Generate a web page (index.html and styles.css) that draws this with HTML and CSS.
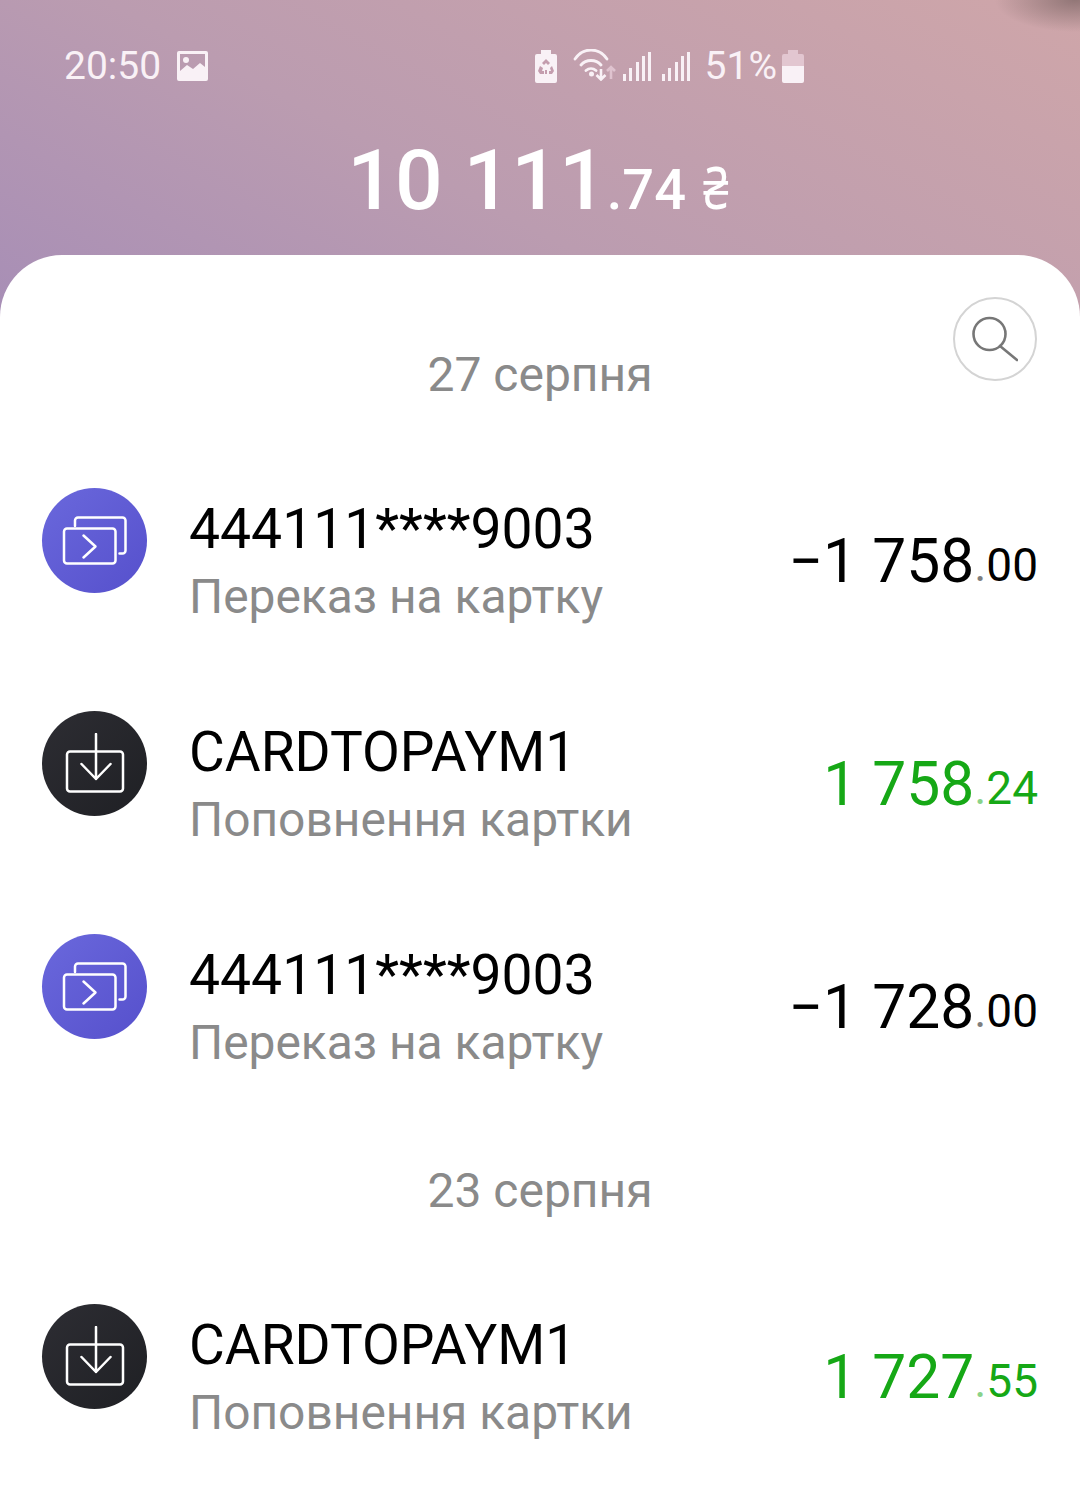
FILE: index.html
```html
<!DOCTYPE html>
<html>
<head lang="en">
    <meta charset="UTF-8">
    <title></title>
    <link rel="stylesheet" href="styles.css">
</head>
<body>
<div class="screen">
    <div class="top">
        <div class="status">
            <div class="status-left">
                <span class="clock">20:50</span>
                <svg class="pic-icon" width="31" height="30" viewBox="0 0 31 30">
                    <path fill="#f9f1f6" fill-rule="evenodd" d="M2 0h27a2 2 0 0 1 2 2v26a2 2 0 0 1-2 2H2a2 2 0 0 1-2-2V2a2 2 0 0 1 2-2zm1 3v17l7-6 6 4 7-6 5 4V3z"/>
                    <circle cx="9" cy="9" r="3" fill="#f9f1f6"/>
                </svg>
            </div>
            <div class="status-right">
                <svg width="24" height="33" viewBox="0 0 24 33">
                    <path fill="#f9f1f6" d="M7 0h10v4h4a2 2 0 0 1 2 2v25a2 2 0 0 1-2 2H3a2 2 0 0 1-2-2V6a2 2 0 0 1 2-2h4z"/>
                    <path fill="#c49dae" d="M12 9l4 4-2 2-2-2-2 2-2-2zM18 16l2 5-2 3h-3v-3h2l-1-3zM6 16l3 2-1 3h2v3H6l-2-3zM11 20h2v4h-2z"/>
                </svg>
                <svg class="wifi" width="43" height="32" viewBox="0 0 43 32">
                    <path fill="none" stroke="#f9f1f6" stroke-width="2.800" stroke-linecap="round" d="M2 10C10-2 26-2 34 10M8 16c5-6 15-6 20 0M13 21.500c3-2.500 7-2.500 10 0"/>
                    <circle cx="18.500" cy="25" r="2.500" fill="#f9f1f6"/>
                    <path fill="none" stroke="#f9f1f6" stroke-width="2.600" d="M28 20v10M23.500 26l4.500 4.500 4.500-4.500"/>
                    <path fill="none" stroke="#dfc3cf" stroke-width="2.600" d="M38 30V18M34 22l4-4 4 4"/>
                </svg>
                <svg class="signal" width="28" height="30" viewBox="0 0 28 30">
                    <path fill="#f9f1f6" d="M0 23h3v7H0zM6 17h3v13H6zM13 11h3v19h-3zM19 5h3v25h-3zM25 1h3v29h-3z"/>
                </svg>
                <svg class="signal" width="28" height="30" viewBox="0 0 28 30">
                    <path fill="#f9f1f6" d="M0 23h3v7H0zM6 17h3v13H6zM13 11h3v19h-3zM19 5h3v25h-3zM25 1h3v29h-3z"/>
                </svg>
                <span class="percent">51%</span>
                <svg width="22" height="33" viewBox="0 0 22 33">
                    <path fill="#e2c6d0" d="M6 0h10v4h4a2 2 0 0 1 2 2v10H0V6a2 2 0 0 1 2-2h4z"/>
                    <path fill="#f9f1f6" d="M0 16h22v15a2 2 0 0 1-2 2H2a2 2 0 0 1-2-2z"/>
                </svg>
            </div>
        </div>
        <div class="balance">
            <span class="balance-main">10 111</span><span class="balance-cents">.74</span><span class="balance-cur">₴</span>
        </div>
    </div>
    <div class="sheet">
        <div class="search">
            <svg width="46" height="46" viewBox="0 0 46 46">
                <circle cx="17.500" cy="18" r="16" fill="none" stroke="#777" stroke-width="2.600"/>
                <path d="M28 30l17 14" fill="none" stroke="#777" stroke-width="2.600" stroke-linecap="round"/>
            </svg>
        </div>
        <div class="date date-first">27 серпня</div>
        <div class="row">
            <div class="ico ico-blue">
                <svg width="66" height="50" viewBox="0 0 66 50">
                    <path fill="none" stroke="#fff" stroke-width="2.500" stroke-linecap="round" stroke-linejoin="round" d="M13 10V4.500a3 3 0 0 1 3-3h44.500a3 3 0 0 1 3 3v30a3 3 0 0 1-3 3h-3"/>
                    <rect x="2" y="12.500" width="51.500" height="35" rx="3" fill="none" stroke="#fff" stroke-width="2.500"/>
                    <path fill="none" stroke="#fff" stroke-width="2.500" stroke-linecap="round" stroke-linejoin="round" d="M21.500 19.500l12 11-12 11"/>
                </svg>
            </div>
            <div class="info">
                <div class="name">444111****9003</div>
                <div class="kind">Переказ на картку</div>
            </div>
            <div class="sum">−1 758<span class="cents"><span class="dot">.</span>00</span></div>
        </div>
        <div class="row">
            <div class="ico ico-dark">
                <svg width="60" height="62" viewBox="0 0 60 62">
                    <rect x="2" y="18.500" width="56" height="40" rx="3" fill="none" stroke="#fff" stroke-width="2.500"/>
                    <path fill="none" stroke="#fff" stroke-width="2.500" stroke-linecap="round" stroke-linejoin="round" d="M31 1v45M16.500 31L31 46l14.500-15"/>
                </svg>
            </div>
            <div class="info">
                <div class="name name-caps">CARDTOPAYM1</div>
                <div class="kind">Поповнення картки</div>
            </div>
            <div class="sum sum-plus">1 758<span class="cents"><span class="dot">.</span>24</span></div>
        </div>
        <div class="row">
            <div class="ico ico-blue">
                <svg width="66" height="50" viewBox="0 0 66 50">
                    <path fill="none" stroke="#fff" stroke-width="2.500" stroke-linecap="round" stroke-linejoin="round" d="M13 10V4.500a3 3 0 0 1 3-3h44.500a3 3 0 0 1 3 3v30a3 3 0 0 1-3 3h-3"/>
                    <rect x="2" y="12.500" width="51.500" height="35" rx="3" fill="none" stroke="#fff" stroke-width="2.500"/>
                    <path fill="none" stroke="#fff" stroke-width="2.500" stroke-linecap="round" stroke-linejoin="round" d="M21.500 19.500l12 11-12 11"/>
                </svg>
            </div>
            <div class="info">
                <div class="name">444111****9003</div>
                <div class="kind">Переказ на картку</div>
            </div>
            <div class="sum">−1 728<span class="cents"><span class="dot">.</span>00</span></div>
        </div>
        <div class="date">23 серпня</div>
        <div class="row">
            <div class="ico ico-dark">
                <svg width="60" height="62" viewBox="0 0 60 62">
                    <rect x="2" y="18.500" width="56" height="40" rx="3" fill="none" stroke="#fff" stroke-width="2.500"/>
                    <path fill="none" stroke="#fff" stroke-width="2.500" stroke-linecap="round" stroke-linejoin="round" d="M31 1v45M16.500 31L31 46l14.500-15"/>
                </svg>
            </div>
            <div class="info">
                <div class="name name-caps">CARDTOPAYM1</div>
                <div class="kind">Поповнення картки</div>
            </div>
            <div class="sum sum-plus">1 727<span class="cents"><span class="dot">.</span>55</span></div>
        </div>
    </div>
</div>
</body>
</html>
```

FILE: styles.css
```css
* {
    margin: 0;
    padding: 0;
    box-sizing: border-box;
}

html, body {
    width: 1080px;
    height: 1506px;
    overflow: hidden;
}

body {
    font-family: Roboto, "Noto Sans", sans-serif;
    background-color: #fff;
}

.screen {
    width: 1080px;
    height: 1506px;
    display: flex;
    flex-direction: column;
    background-image:
        radial-gradient(ellipse 80px 32px at 1075px 0, rgba(135, 110, 110, .85), rgba(135, 110, 110, 0)),
        linear-gradient(28deg, #a78eb6 0%, #bb9cb0 42%, #cfa6a9 100%);
    background-size: 100% 320px;
    background-repeat: no-repeat;
}

.top {
    height: 255px;
    flex-shrink: 0;
    padding-top: 44px;
}

.status {
    display: flex;
    justify-content: space-between;
    align-items: center;
    height: 44px;
    padding: 0 276px 0 64px;
    color: #f9f1f6;
}

.status-left, .status-right {
    display: flex;
    align-items: center;
}

.clock {
    font-size: 39px;
}

.pic-icon {
    margin-left: 16px;
}

.status-right .wifi {
    margin-left: 15px;
    margin-bottom: 2px;
}

.status-right .signal {
    margin-left: 7px;
}

.status-right .signal + .signal {
    margin-left: 11px;
}

.percent {
    font-size: 39px;
    margin-left: 15px;
    margin-right: 5px;
}

.balance {
    margin-top: 48px;
    margin-left: -3px;
    display: flex;
    justify-content: center;
    align-items: baseline;
    color: #fff;
    line-height: 90px;
}

.balance-main {
    font-size: 84px;
    font-weight: 500;
}

.balance-cents {
    font-size: 56px;
    font-weight: 500;
}

.balance-cur {
    font-family: "Noto Sans", sans-serif;
    font-size: 58px;
    margin-left: 17px;
    margin-right: -5px;
    transform: scaleX(.8);
    transform-origin: left;
}

.sheet {
    flex: 1;
    position: relative;
    background-color: #fff;
    border-radius: 62px 62px 0 0;
    padding: 0 42px;
}

.search {
    position: absolute;
    top: 42px;
    right: 43px;
    width: 84px;
    height: 84px;
    border: 2.500px solid #d4d4d4;
    border-radius: 50%;
    display: flex;
    align-items: center;
    justify-content: center;
}

.date {
    height: 60px;
    line-height: 60px;
    font-size: 48px;
    text-align: center;
    color: #8a8a8a;
    margin-top: 43px;
    margin-bottom: 44px;
}

.date-first {
    margin-top: 90px;
    margin-bottom: 0;
}

.row {
    display: flex;
    align-items: center;
    height: 223px;
}

.date-first + .row {
    margin-top: 44px;
}

.ico {
    width: 105px;
    height: 105px;
    flex-shrink: 0;
    margin-bottom: 40px;
    border-radius: 50%;
    display: flex;
    align-items: center;
    justify-content: center;
}

.ico-blue {
    background: linear-gradient(135deg, #6a68dc, #5650cc);
}

.ico-dark {
    background: linear-gradient(135deg, #2d2d33, #1f2024);
}

.info {
    flex: 1;
    margin-left: 42px;
}

.name {
    font-size: 55.250px;
    line-height: 62px;
    color: #000;
}

.name-caps {
    font-size: 55px;
}

.kind {
    font-size: 47.900px;
    line-height: 54px;
    margin-top: 10px;
    color: #8a8a8a;
}

.sum {
    font-size: 60.500px;
    padding-top: 2px;
    color: #000;
    white-space: nowrap;
}

.sum-plus {
    color: #16a816;
}

.cents {
    font-size: 46px;
    vertical-align: 1px;
}

.dot {
    opacity: .5;
}
```
